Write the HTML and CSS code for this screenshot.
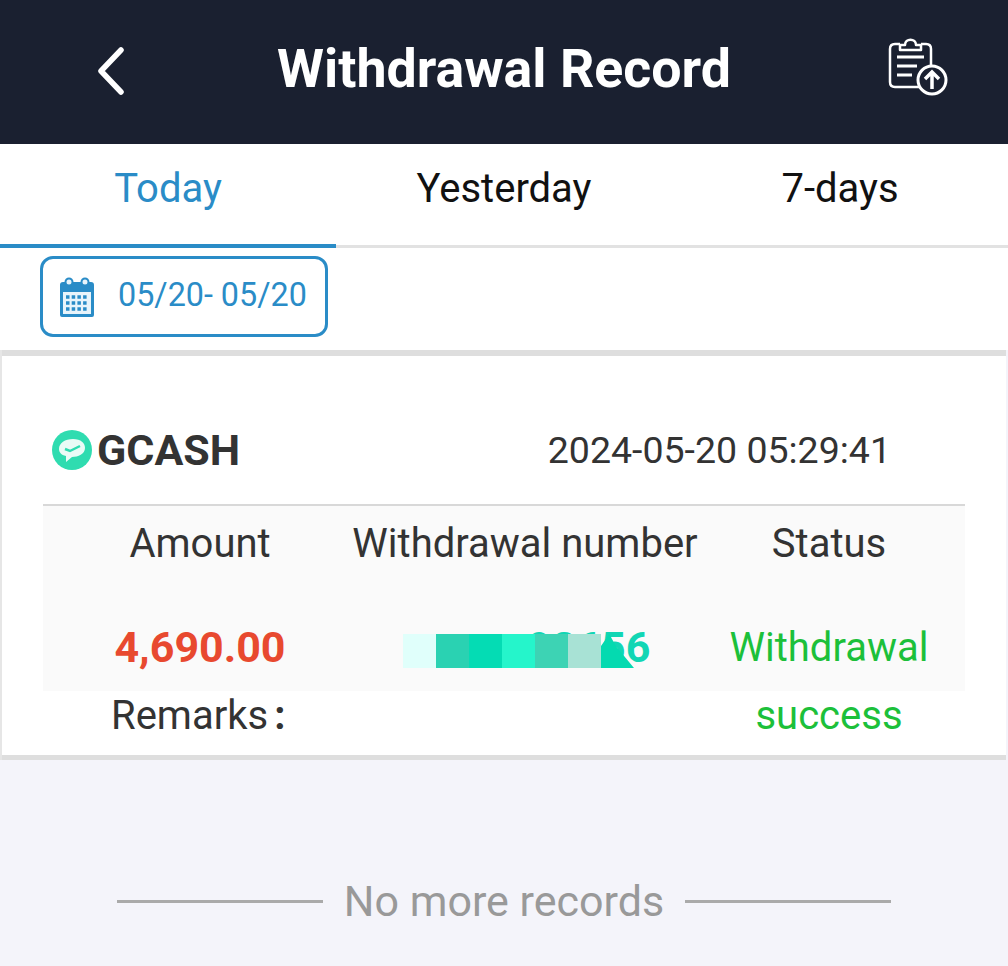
FILE: index.html
```html
<!DOCTYPE html>
<html lang="en">
<head>
    <meta charset="UTF-8">
    <meta name="viewport" content="width=device-width, initial-scale=1.0">
    <title>Withdrawal Record</title>
    <link rel="stylesheet" href="styles.css">
</head>
<body>
    <header class="topbar">
        <svg class="back-icon" width="30" height="48" viewBox="0 0 30 48">
            <path d="M25 3 L5 24 L25 45" fill="none" stroke="#fff" stroke-width="5.5" stroke-linecap="round" stroke-linejoin="round"/>
        </svg>
        <h1>Withdrawal Record</h1>
        <svg class="record-icon" width="62" height="62" viewBox="0 0 62 62">
            <path d="M36 52 H8 Q3 52 3 47 V14 Q3 9 8 9 H13" fill="none" stroke="#fff" stroke-width="2.5"/>
            <path d="M34 9 H39 Q44 9 44 14 V31" fill="none" stroke="#fff" stroke-width="2.5"/>
            <path d="M13 15 V10 H18 C18 3 29 3 29 10 H34 V15 Z" fill="none" stroke="#fff" stroke-width="2.5" stroke-linejoin="round"/>
            <path d="M10 22 H37 M10 31 H30 M10 40 H25" stroke="#fff" stroke-width="3"/>
            <circle cx="45" cy="45" r="14" fill="#1a2030" stroke="#fff" stroke-width="3"/>
            <path d="M45 54 V37 M38 44 L45 37 L52 44" fill="none" stroke="#fff" stroke-width="3.5"/>
        </svg>
    </header>

    <nav class="tabs">
        <a class="tab active">Today</a>
        <a class="tab">Yesterday</a>
        <a class="tab">7-days</a>
    </nav>

    <div class="filter">
        <div class="date-btn">
            <svg width="36" height="40" viewBox="0 0 36 40">
                <path d="M2 5 H32 Q35 5 35 8 V38 Q35 40 33 40 H3 Q1 40 1 38 V8 Q1 5 4 5 Z" fill="#2a8cc7"/>
                <rect x="4" y="15" width="28" height="22" fill="#e8f4fb"/>
                <circle cx="10" cy="5" r="3.5" fill="#e8f4fb" stroke="#2a8cc7" stroke-width="2"/>
                <circle cx="26" cy="5" r="3.5" fill="#e8f4fb" stroke="#2a8cc7" stroke-width="2"/>
                <path d="M7 20 H29 M7 26 H29 M7 32 H29" stroke="#2a8cc7" stroke-width="3.5" stroke-dasharray="3.5 2.2"/>
            </svg>
            <span class="date-text">05/20- 05/20</span>
        </div>
    </div>

    <section class="card">
        <div class="card-head">
            <div class="bank">
                <svg width="40" height="40" viewBox="0 0 40 40">
                    <circle cx="20" cy="20" r="20" fill="#2fdcb0"/>
                    <path d="M21 9 C29 9 33 13 33 18 C33 24 26 27 20 27 L14 32 L14 26 C9 25 7 22 7 19 C7 13 13 9 21 9 Z" fill="#eafbf6"/>
                    <path d="M13 19 L18 21 L28 16" fill="none" stroke="#2fdcb0" stroke-width="2.5"/>
                </svg>
                <span>GCASH</span>
            </div>
            <div class="time">2024-05-20 05:29:41</div>
        </div>

        <div class="record">
            <div class="cell label">Amount</div>
            <div class="cell label">Withdrawal number</div>
            <div class="cell label">Status</div>
            <div class="cell amount">4,690.00</div>
            <div class="cell number">
                <span>92656</span>
                <div class="mosaic">
                    <i class="m1"></i><i class="m2"></i><i class="m3"></i><i class="m4"></i><i class="m5"></i><i class="m6"></i><i class="m7"></i>
                </div>
            </div>
            <div class="cell status">Withdrawal success</div>
        </div>
        <div class="remarks">Remarks<span class="colon">:</span></div>
    </section>

    <div class="no-more">
        <span class="rule"></span>
        <span>No more records</span>
        <span class="rule"></span>
    </div>
</body>
</html>
```

FILE: styles.css
```css
body {
    font-family: Roboto, "Liberation Sans", sans-serif;
    background-color: #f4f4fa;
    margin: 0;
    padding: 0;
    color: #333;
}
.topbar {
    height: 144px;
    background: #1a2030;
    display: flex;
    align-items: center;
    justify-content: center;
    position: relative;
}
.topbar h1 {
    margin: 0 0 8px;
    color: #fff;
    font-size: 53.7px;
    font-weight: 700;
}
.back-icon {
    position: absolute;
    left: 96px;
    top: 47px;
}
.record-icon {
    position: absolute;
    left: 887px;
    top: 35px;
}
.tabs {
    display: flex;
    height: 104px;
    box-sizing: border-box;
    background: #fff;
    border-bottom: 3px solid #e2e2e2;
}
.tab {
    width: 336px;
    height: 101px;
    line-height: 90px;
    text-align: center;
    font-size: 40px;
    color: #111;
}
.tab.active {
    color: #2a8cc7;
    height: 100px;
    border-bottom: 4px solid #2a8cc7;
}
.filter {
    height: 102px;
    background: #fff;
    padding: 8px 0 0 40px;
    box-sizing: border-box;
}
.date-btn {
    width: 288px;
    height: 81px;
    box-sizing: border-box;
    border: 3px solid #2a8cc7;
    border-radius: 13px;
    display: flex;
    align-items: center;
    padding-left: 16px;
    gap: 23px;
    color: #2a8cc7;
    font-size: 32.3px;
}
.date-text {
    margin-bottom: 3px;
}
.card {
    background: #fff;
    margin: 0 2px;
    height: 410px;
    box-sizing: border-box;
    border-top: 6px solid #dedede;
    border-bottom: 5px solid #dedede;
    box-shadow: -2px 0 0 #e6e6e6;
}
.card-head {
    height: 150px;
    margin: 0 41px;
    box-sizing: border-box;
    border-bottom: 2px solid #d8d8d8;
    display: flex;
    align-items: center;
    justify-content: space-between;
    padding: 40px 74px 0 9px;
}
.bank {
    display: flex;
    align-items: center;
    gap: 5px;
    font-size: 43px;
    font-weight: 700;
}
.time {
    font-size: 37.5px;
}
.record {
    margin: 0 41px;
    height: 185px;
    background: #fafafa;
    display: grid;
    grid-template-columns: 314px 336px 272px;
    grid-template-rows: 76px 106px;
    text-align: center;
}
.cell {
    font-size: 40px;
}
.label {
    line-height: 76px;
    white-space: nowrap;
    margin: 0 -10px;
}
.amount {
    color: #e8492f;
    font-weight: 700;
    line-height: 130px;
    font-size: 43px;
}
.number {
    position: relative;
    color: #12d6b4;
    font-weight: 700;
    line-height: 130px;
    font-size: 43px;
    padding-left: 170px;
    box-sizing: border-box;
    text-align: left;
}
.mosaic {
    position: absolute;
    left: 46px;
    top: 52px;
    display: flex;
    height: 34px;
}
.mosaic i {
    width: 33px;
    display: block;
}
.m1 { background: #e0fffb; }
.m2 { background: #2ad2b2; }
.m3 { background: #04dcb4; }
.m4 { background: #25f5cb; }
.m5 { background: #3dd3b4; }
.m6 { background: #a8e2d5; }
.m7 {
    background: #04dab0;
    clip-path: polygon(0 35%, 25% 0, 45% 35%, 100% 100%, 0 100%);
}
.status {
    color: #1cc03a;
    line-height: 68px;
    padding: 32px 30px 0;
    box-sizing: border-box;
}
.remarks {
    margin-left: 109px;
    font-size: 40px;
    line-height: 50px;
}
.colon {
    margin-left: 6px;
    font-weight: 700;
}
.no-more {
    display: flex;
    align-items: center;
    justify-content: center;
    gap: 21px;
    margin-top: 116px;
    color: #999;
    font-size: 43px;
}
.rule {
    width: 206px;
    height: 3px;
    background: #aaa;
}
```
